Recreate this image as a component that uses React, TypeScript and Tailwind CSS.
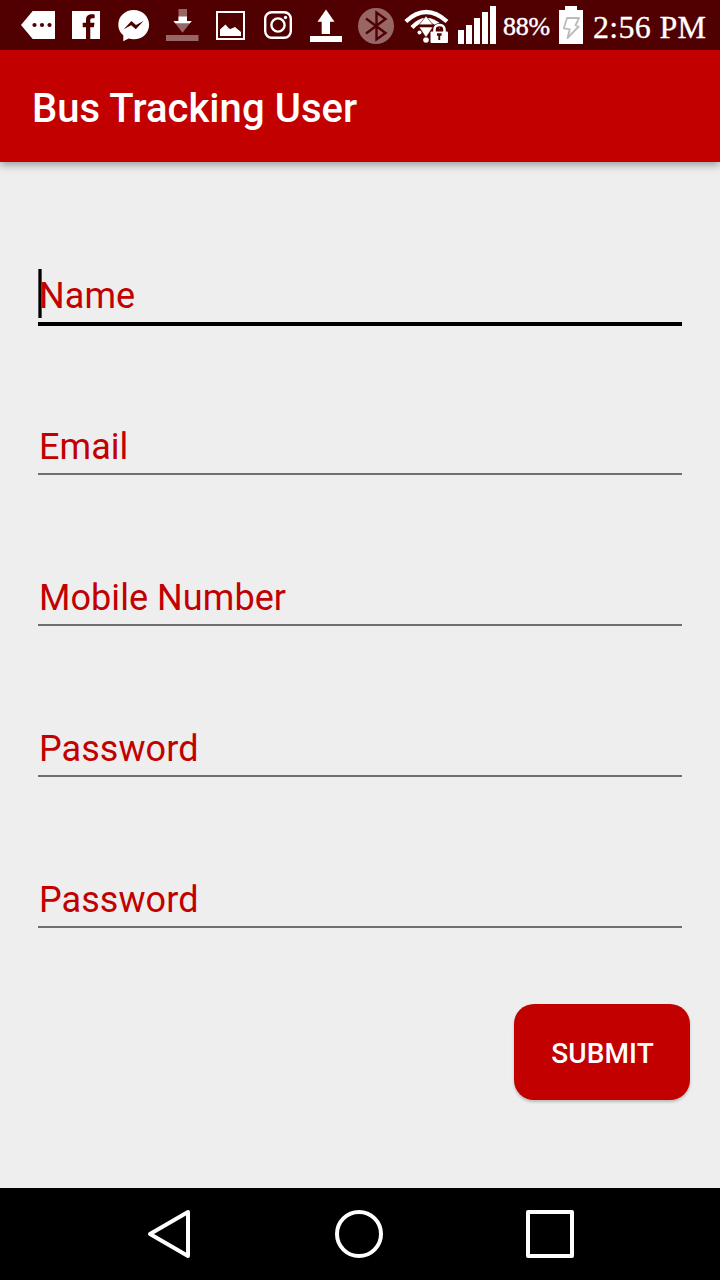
import { useState } from 'react';

const fields = [
  { id: 'name', label: 'Name' },
  { id: 'email', label: 'Email' },
  { id: 'mobile', label: 'Mobile Number' },
  { id: 'password', label: 'Password' },
  { id: 'confirmPassword', label: 'Password' },
];

// Notification icons on the left of the status bar
function NotificationIcons() {
  return (
    <svg className="block h-[50px] w-[350px] shrink-0" viewBox="0 0 350 50" fill="#fff">
      {/* more */}
      <path d="M21 25 32.7 11H55v28H32.7z" />
      <g fill="#500000">
        <circle cx="34.5" cy="25" r="2.1" />
        <circle cx="42" cy="25" r="2.1" />
        <circle cx="49.5" cy="25" r="2.1" />
      </g>

      {/* facebook */}
      <path d="M72 11h28v28h-9.7V27.200h3.600l.6-4.400h-4.200v-2.600c0-1.300.6-2 2-2h2.300v-3.800c-5-.9-8.600.7-8.600 5.300v3.100h-3.300v4.400H86V39H72z" />

      {/* messenger */}
      <path d="M133.800 10c-8.700 0-15.500 6.300-15.500 14.700 0 4.500 1.800 8 5 10.600v6l5.300-2.700c1.600.5 3.300.7 5.200.7 8.700 0 15.300-6.300 15.300-14.600S142.500 10 133.800 10z" />
      <path fill="#500000" d="m123.700 29.300 7.700-8.300 4.600 4 7.500-4-7.700 8.300-4.600-4z" />

      {/* download */}
      <path fill="#996666" d="M178.500 9h8.500v12h4.700l-9.200 11.700L173.500 21h5zM166 35h32.500v6H166z" />
      <path d="M178.500 16.500h8.500V21h4.700l-1.800 2.300h-14.600L173.500 21h5z" />

      {/* picture */}
      <path fill="none" stroke="#fff" strokeWidth="2" d="M217 12h27v27h-27z" />
      <path d="M220 36v-6.500l5.500-5 3.500 4 1.500.5 4.500-2 6 5v4z" />

      {/* instagram */}
      <g fill="none" stroke="#fff" strokeWidth="2.400">
        <rect x="265.200" y="12.200" width="25.600" height="25.600" rx="6.500" />
        <circle cx="278" cy="25" r="6.600" />
      </g>
      <circle cx="285.500" cy="17.500" r="1.700" />

      {/* upload */}
      <path d="m326 9.500 8.500 12.200H330V34h-8.300V21.700h-4.200zM310 36h32v6h-32z" />
    </svg>
  );
}

// Bluetooth, wifi and signal strength
function ConnectionIcons() {
  return (
    <svg className="block h-[50px] w-[153px] shrink-0" viewBox="350 0 153 50" fill="#fff">
      <circle cx="376" cy="26" r="18" fill="#996666" />
      <path fill="none" stroke="#500000" strokeWidth="2.400" d="m366 18.500 19.500 14.500-9 6.500v-27l9 6.500L366 33.500" />

      <g fill="none" stroke="#fff" strokeWidth="4.200">
        <path d="M405.800 21.500Q426 2.500 447 21.500" />
        <path d="M412 27.500Q426 12.500 441 27" />
      </g>
      <circle cx="419.500" cy="32.500" r="2" />
      <circle cx="426" cy="40" r="2.800" />
      <path stroke="#500000" strokeWidth="0.600" d="m426 16 7 8.800h-14zM419 27h14l-7 10.500z" />
      <path stroke="#500000" strokeWidth="1.500" d="M419.500 25.800h13" />

      {/* lock */}
      <path fill="none" stroke="#500000" strokeWidth="4.600" d="M435 33v-3.500c0-5.500 9-5.500 9 0V33" />
      <path fill="none" stroke="#fff" strokeWidth="2.600" d="M434.500 33v-3.500c0-6 10-6 10 0V33" />
      <rect x="430.500" y="31.500" width="17.500" height="11.500" rx="1" />
      <path fill="#500000" d="M437 33.200h4.600v2.600H440.200v4.200h-1.900v-4.200H437z" />

      <path d="M458 30h6v14h-6zM466 25h6v19h-6zM474 18h6v26h-6zM482 12h6v32h-6zM490 6h6v38h-6z" />
    </svg>
  );
}

function BatteryIcon() {
  return (
    <svg className="ml-[9px] block h-[50px] w-6 shrink-0" viewBox="559 0 24 50" fill="#fff">
      <path d="M565 6h12v4h6v34h-24V10h6z" />
      <path
        fill="none"
        stroke="#bbb"
        strokeWidth="1.800"
        strokeLinejoin="round"
        d="M567 18h12l-3.500 7.500 3.200 1L567.500 38l2.300-8.700-6-1z"
      />
    </svg>
  );
}

export default function App() {
  const [values, setValues] = useState<Record<string, string>>({});

  return (
    <div className="flex h-[1280px] w-[720px] flex-col overflow-hidden bg-[#eeeeee] font-['Roboto',sans-serif]">
      <div className="flex h-[50px] shrink-0 items-center bg-[#500000] font-['Liberation_Serif',serif] text-white">
        <NotificationIcons />
        <ConnectionIcons />
        <span className="w-[47px] whitespace-nowrap pt-[3px] text-[26px] leading-none tracking-[-0.2px] [-webkit-text-stroke:0.4px_white]">88%</span>
        <BatteryIcon />
        <span className="ml-[10px] whitespace-nowrap pt-[3px] text-[32px] leading-none tracking-[0.3px] [-webkit-text-stroke:0.3px_white]">2:56 PM</span>
      </div>

      <header className="flex h-28 shrink-0 items-center bg-[#c20000] px-8 pt-1.5 shadow-[0_3px_8px_rgba(0,0,0,0.35)]">
        <h1 className="text-[40px] font-medium leading-none tracking-[0.06px] text-white">Bus Tracking User</h1>
      </header>

      <form className="flex flex-1 flex-col px-[38px] pt-[107px]" onSubmit={(e) => e.preventDefault()}>
        {fields.map((field, i) => (
          <div
            key={field.id}
            className={
              i === 0
                ? 'relative mb-[94px] h-[57px] border-b-4 border-black'
                : 'relative mb-[96px] h-[55px] border-b-2 border-[#6f6f6f]'
            }
          >
            {/* text cursor of the focused field */}
            {i === 0 && <span className="absolute left-0 top-0 h-[49px] w-1 border-x border-[#555] bg-black" />}
            <input
              value={values[field.id] || ''}
              onChange={(e) => setValues({ ...values, [field.id]: e.target.value })}
              placeholder={field.label}
              className="relative block h-[53px] w-full bg-transparent pl-px text-[36px] tracking-[0.06px] text-[#c20000] outline-none placeholder:text-[#c20000]"
            />
          </div>
        ))}
        <button
          type="submit"
          className="-mr-2 -mt-5 h-24 w-44 self-end rounded-[20px] bg-[#c20000] pl-px pt-1 text-[28px] font-medium tracking-[0.1px] text-white shadow-[0_2px_3px_rgba(0,0,0,0.22)]"
        >
          SUBMIT
        </button>
      </form>

      <nav className="h-[92px] shrink-0 bg-black">
        <svg className="block h-[92px] w-[720px]" viewBox="0 0 720 92" fill="none" stroke="#fff" strokeWidth="4" strokeLinejoin="round">
          <path d="M188 24v44l-38-22z" />
          <circle cx="359" cy="46" r="22" />
          <path d="M528 24h44v44h-44z" />
        </svg>
      </nav>
    </div>
  );
}
